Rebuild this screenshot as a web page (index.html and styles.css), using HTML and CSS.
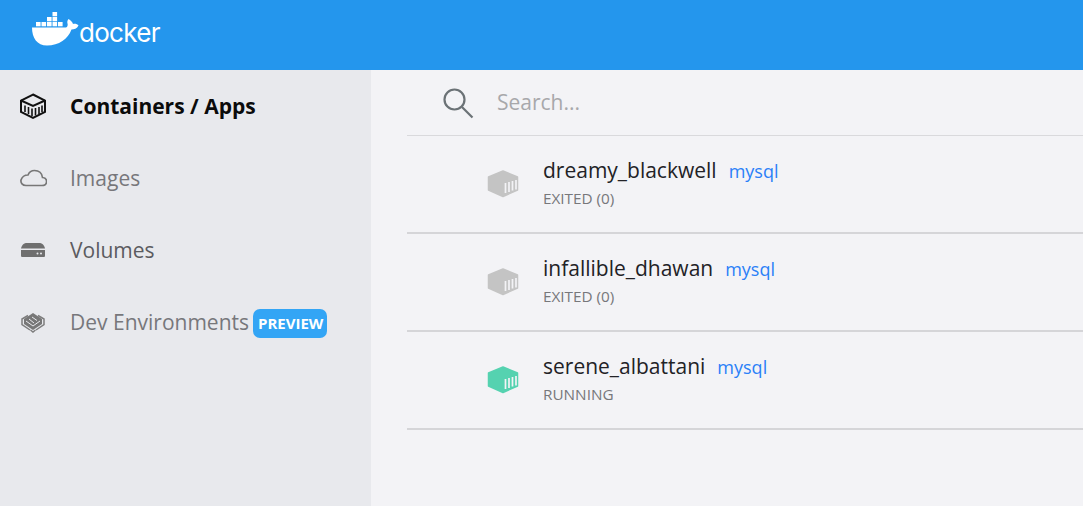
FILE: index.html
```html
<!DOCTYPE html>
<html lang="en">
<head>
  <meta charset="UTF-8">
  <title>Docker Desktop</title>
  <link rel="stylesheet" href="styles.css">
</head>
<body>

  <header class="topbar">
    <svg class="whale" viewBox="0 0 48 35" width="48" height="35">
      <g fill="#fff">
        <rect x="20.500" y="0" width="4.600" height="4.300"/>
        <rect x="15" y="5" width="4.600" height="4.300"/><rect x="20.500" y="5" width="4.600" height="4.300"/>
        <rect x="4" y="10" width="4.600" height="4.300"/><rect x="9.500" y="10" width="4.600" height="4.300"/><rect x="15" y="10" width="4.600" height="4.300"/><rect x="20.500" y="10" width="4.600" height="4.300"/><rect x="26" y="10" width="4.600" height="4.300"/>
        <path d="M0 15.500H33.500C35.500 15.500 36 13 35.500 11.500C35 10 35.500 8 36.500 7C38.500 8 40.500 10 41 12C43 11.500 45.500 12 46.500 13.500C45 16.500 42 17.500 39.500 17.500C36 27 27 33.500 15 33.500C5 33.500 0 26 0 15.500Z"/>
      </g>
    </svg>
    <span class="wordmark">docker</span>
  </header>

  <div class="layout">
    <nav class="sidebar">
      <a class="nav-item active">
        <svg class="nav-icon" viewBox="0 0 28 28" width="28" height="28" fill="none" stroke="#111" stroke-width="2">
          <path d="M14 2.500L26 8.500V20L14 26L2 20V8.500Z"/>
          <path d="M2 8.500L14 14L26 8.500"/>
          <path d="M6 13.500V20M9.500 15V22M13 16.500V24M16.500 16V23.500M20 15V22M23 13.500V20" stroke-width="1.600"/>
        </svg>
        <span>Containers / Apps</span>
      </a>
      <a class="nav-item">
        <svg class="nav-icon" viewBox="0 0 28 28" width="28" height="28" fill="none" stroke="#777" stroke-width="1.700">
          <path d="M7 21.500H23C29 21.500 29 14 23.500 13.500C23 9.500 20 6.500 15.500 6.500C12 6.500 10 8.500 9 11C5.500 11 3 13 2 16C1.500 19 3.500 21.500 7 21.500Z"/>
        </svg>
        <span>Images</span>
      </a>
      <a class="nav-item">
        <svg class="nav-icon" viewBox="0 0 28 28" width="28" height="28">
          <path fill="#6f6f6f" d="M2 12.500C3 8.500 5 7 8 7H20C23 7 25 8.500 26 12.500Z"/>
          <path fill="#6f6f6f" d="M2 14H26V19.500C26 20.500 25.500 21 24.500 21H3.500C2.500 21 2 20.500 2 19.500Z"/>
          <circle cx="18.500" cy="17.500" r="1" fill="#e8e9ed"/><circle cx="22" cy="17.500" r="1" fill="#e8e9ed"/>
        </svg>
        <span>Volumes</span>
      </a>
      <a class="nav-item">
        <svg class="nav-icon" viewBox="0 0 28 28" width="28" height="28" fill="none" stroke="#7d7d7d" stroke-width="1.500">
          <path d="M9 7.500L3 11V16.500L11 22M17 22L25 16.500V11L19 7.500"/>
          <path d="M11.500 22L14 24L16.500 22"/>
          <path fill="#777" stroke="none" d="M14 5L23 11V16L14 22L5 16V11Z"/>
          <path stroke="#e8e9ed" stroke-width="1" d="M7 13L14 18L21 13M10 11L15 15M13 9L18 12.500"/>
        </svg>
        <span>Dev Environments</span>
        <span class="badge">PREVIEW</span>
      </a>
    </nav>

    <main class="content">
      <div class="search">
        <svg viewBox="0 0 32 32" width="32" height="32" fill="none" stroke="#6b7276" stroke-width="2.200">
          <circle cx="12.500" cy="12.500" r="10"/>
          <path d="M20 20L30.500 30.500"/>
        </svg>
        <span class="placeholder">Search...</span>
      </div>

      <div class="row">
        <svg class="box stopped" viewBox="0 0 32 28" width="32" height="28">
          <path class="shell" d="M16 1L30.500 7V20L16 26.500L1.500 20V7Z"/>
          <path class="slats" d="M18.500 13V23M22 12V22M25.500 11V20.500M29 10V19.500"/>
        </svg>
        <div class="row-text">
          <div class="row-title"><span class="name">dreamy_blackwell</span><span class="image">mysql</span></div>
          <div class="status">EXITED (0)</div>
        </div>
      </div>

      <div class="row">
        <svg class="box stopped" viewBox="0 0 32 28" width="32" height="28">
          <path class="shell" d="M16 1L30.500 7V20L16 26.500L1.500 20V7Z"/>
          <path class="slats" d="M18.500 13V23M22 12V22M25.500 11V20.500M29 10V19.500"/>
        </svg>
        <div class="row-text">
          <div class="row-title"><span class="name">infallible_dhawan</span><span class="image">mysql</span></div>
          <div class="status">EXITED (0)</div>
        </div>
      </div>

      <div class="row">
        <svg class="box running" viewBox="0 0 32 28" width="32" height="28">
          <path class="shell" d="M16 1L30.500 7V20L16 26.500L1.500 20V7Z"/>
          <path class="slats" d="M18.500 13V23M22 12V22M25.500 11V20.500M29 10V19.500"/>
        </svg>
        <div class="row-text">
          <div class="row-title"><span class="name">serene_albattani</span><span class="image">mysql</span></div>
          <div class="status">RUNNING</div>
        </div>
      </div>
    </main>
  </div>

</body>
</html>
```

FILE: styles.css
```css
html, body {
  height: 100%;
}
body {
  margin: 0;
  font-family: "Open Sans", sans-serif;
  background: #f3f3f6;
  overflow: hidden;
  display: flex;
  flex-direction: column;
}
.topbar {
  flex: 0 0 70px;
  background: #2496ed;
  display: flex;
  align-items: flex-start;
  padding: 12px 0 0 32px;
  box-sizing: border-box;
}
.whale {
  flex: none;
}
.wordmark {
  color: #fff;
  font-family: "Inter", sans-serif;
  font-size: 26px;
  line-height: 26px;
  margin: 8px 0 0 -1px;
  letter-spacing: -0.7px;
}
.layout {
  flex: 1;
  display: flex;
}
.sidebar {
  width: 371px;
  background: #e8e9ed;
}
.nav-item {
  height: 72px;
  display: flex;
  align-items: center;
  padding-left: 19px;
  color: #77777b;
  font-size: 21px;
}
.nav-item .nav-icon {
  margin-right: 23px;
  flex: none;
}
.nav-item.active {
  color: #0b0b0b;
  font-weight: 700;
}
.nav-item:nth-child(3) {
  color: #5b5b60;
}
.badge {
  background: #33a5f5;
  color: #fff;
  font-size: 15px;
  font-weight: 700;
  line-height: 29px;
  padding: 0 4px 0 5px;
  border-radius: 7px;
  margin-left: 4px;
  margin-top: 2px;
}
.content {
  flex: 1;
  margin-left: 36px;
}
.search {
  height: 65px;
  display: flex;
  align-items: center;
  padding-left: 35px;
  border-bottom: 1px solid #d9d9dc;
}
.search svg {
  margin-right: 23px;
}
.placeholder {
  color: #a8a8ab;
  font-size: 21px;
  margin-top: -2px;
}
.row {
  box-sizing: border-box;
  height: 98px;
  display: flex;
  align-items: center;
  padding-left: 80px;
  border-bottom: 2px solid #d5d5d8;
}
.box {
  flex: none;
  margin-right: 24px;
}
.shell {
  stroke-width: 1.500;
  stroke-linejoin: round;
}
.stopped .shell {
  fill: #c4c4c4;
  stroke: #c4c4c4;
}
.running .shell {
  fill: #55d2b0;
  stroke: #55d2b0;
}
.slats {
  stroke: #f3f3f6;
  stroke-width: 1.700;
}
.row-text {
  margin-top: -5px;
}
.row-title {
  line-height: 28px;
}
.name {
  color: #222226;
  font-size: 21px;
}
.image {
  color: #2a80f8;
  font-size: 18px;
  margin-left: 12px;
}
.status {
  color: #77777b;
  font-size: 15.300px;
  line-height: 20px;
  margin-top: 2px;
}
```
